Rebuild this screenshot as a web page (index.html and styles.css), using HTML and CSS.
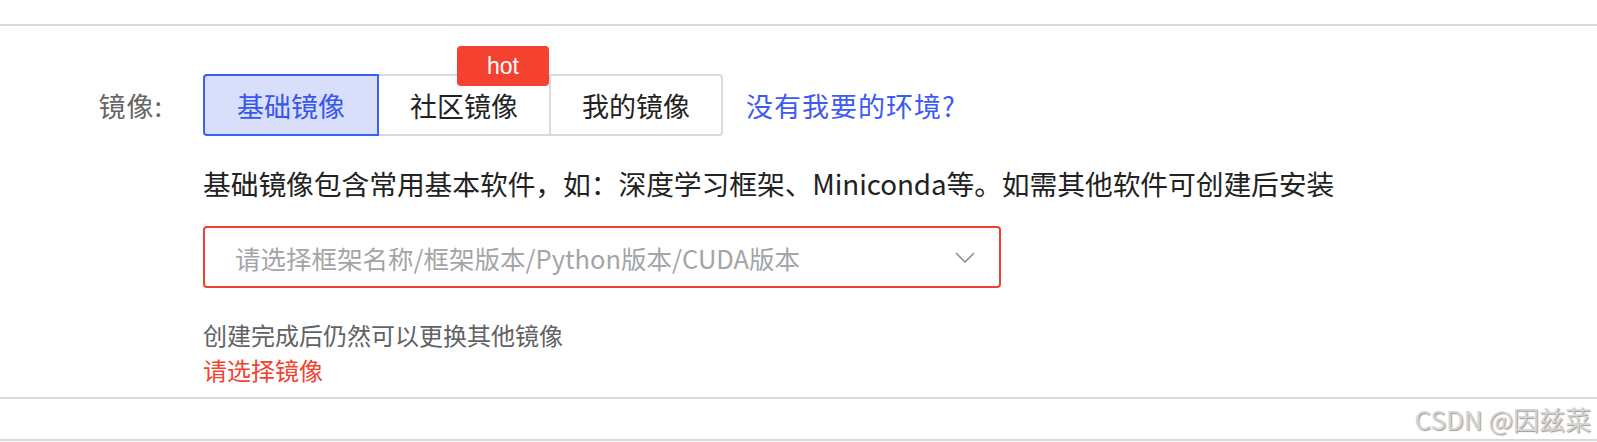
FILE: index.html
```html
<!DOCTYPE html>
<html lang="zh">
  <head>
    <meta charset="utf-8" />
    <meta name="viewport" content="width=device-width, initial-scale=1.0" />
    <title>镜像</title>
    <link rel="stylesheet" href="styles.css">
  </head>

  <body>
    <div class="topspace"></div>
    <div class="divider"></div>

    <section class="form-item">
      <div class="row">
        <label class="label">镜像:</label>
        <nav class="tabs">
          <button class="tab valgt">基础镜像</button>
          <button class="tab">社区镜像<span class="badge">hot</span></button>
          <button class="tab">我的镜像</button>
        </nav>
        <a class="link" href="#">没有我要的环境?</a>
      </div>

      <div class="content">
        <p class="beskrivelse">基础镜像包含常用基本软件，如：深度学习框架、Miniconda等。如需其他软件可创建后安装</p>

        <div class="select">
          <span class="placeholder">请选择框架名称/框架版本/Python版本/CUDA版本</span>
          <svg class="chevron" width="20" height="11" viewBox="0 0 20 11">
            <path d="M1 1 L10 10 L19 1" fill="none" stroke="#8d9199" stroke-width="1.6" />
          </svg>
        </div>

        <p class="hint">创建完成后仍然可以更换其他镜像</p>
        <p class="error">请选择镜像</p>
      </div>
    </section>

    <div class="divider"></div>
    <div class="watermark">CSDN @因兹菜</div>
    <div class="divider"></div>
  </body>
</html>
```

FILE: styles.css
```css
body {
  margin: 0;
  font-family: "Noto Sans CJK SC", "Liberation Sans", sans-serif;
  color: #222;
  background: #fff;
}

.topspace {
  height: 24px;
}

.divider {
  height: 2px;
  background-color: #d7dadd;
}

.form-item {
  padding-top: 48px;
}

.row {
  display: flex;
  align-items: center;
  height: 62px;
}

.label {
  width: 163px;
  padding-right: 40px;
  text-align: right;
  font-size: 27px;
  letter-spacing: 1px;
  color: #666;
}

.tabs {
  display: flex;
}

.tab {
  position: relative;
  width: 174px;
  height: 62px;
  margin-left: -2px;
  padding: 0;
  border: 2px solid #d6d9de;
  background: #fff;
  font-family: inherit;
  font-size: 27px;
  color: #222;
}

.tab:first-child {
  margin-left: 0;
  width: 176px;
  border-radius: 4px 0 0 4px;
}

.tab:last-child {
  border-radius: 0 4px 4px 0;
}

.valgt {
  z-index: 1;
  border-color: #3a62f2;
  background-color: #d9dffb;
  color: #3656ec;
}

.badge {
  position: absolute;
  top: -30px;
  right: 0;
  width: 92px;
  height: 40px;
  line-height: 40px;
  border-radius: 4px;
  background-color: #f5412f;
  color: #fff;
  font-family: "Liberation Sans", sans-serif;
  font-size: 23px;
  text-align: center;
}

.link {
  margin-left: 23px;
  font-size: 27px;
  letter-spacing: 1px;
  color: #3d5af5;
  text-decoration: none;
}

.content {
  padding-left: 203px;
}

.beskrivelse {
  margin: 27px 0 0;
  line-height: 40px;
  font-size: 27.8px;
  letter-spacing: -0.1px;
  color: #222;
}

.select {
  display: flex;
  align-items: center;
  justify-content: space-between;
  box-sizing: border-box;
  width: 798px;
  height: 62px;
  margin-top: 23px;
  padding: 0 24px 0 30px;
  border: 2px solid #f0412f;
  border-radius: 4px;
}

.placeholder {
  font-size: 25.5px;
  color: #a3a5a9;
}

.hint {
  margin: 29px 0 0;
  line-height: 35px;
  font-size: 24px;
  color: #606266;
}

.error {
  margin: 0 0 10px;
  line-height: 35px;
  font-size: 24px;
  color: #f5412f;
}

.watermark {
  height: 40px;
  line-height: 40px;
  padding-right: 6px;
  text-align: right;
  font-size: 26px;
  color: #d4d4d4;
  text-shadow: 1px 1px 1px #9a9a9a;
}
```
